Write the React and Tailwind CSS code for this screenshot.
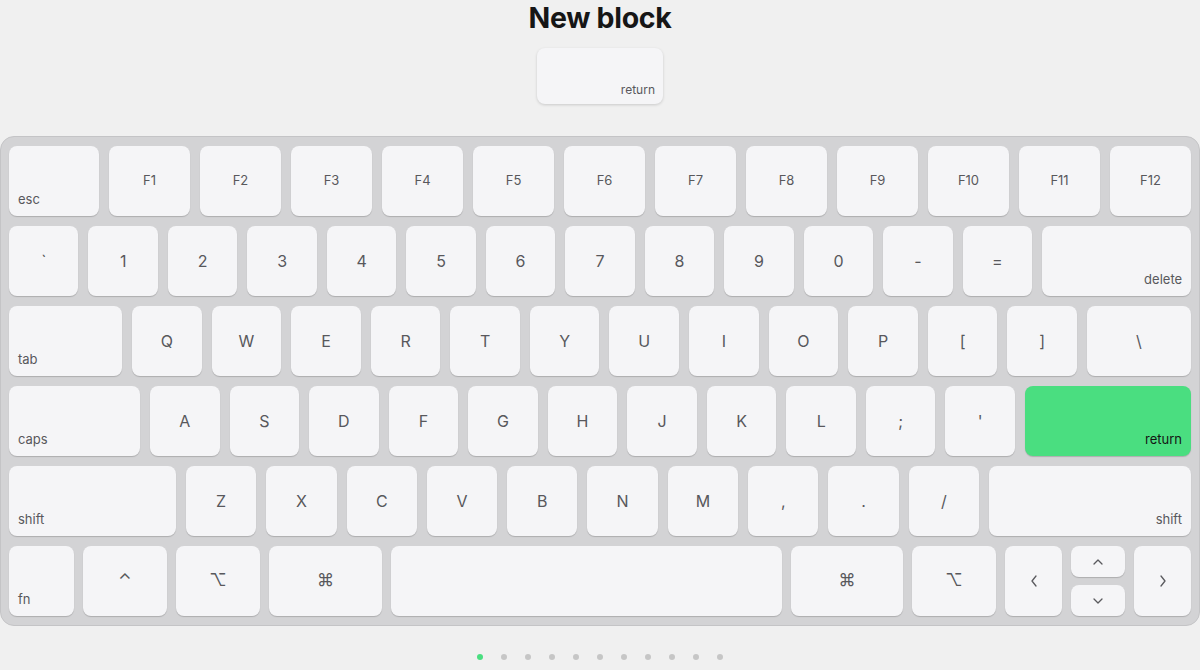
const font = { fontFamily: 'Inter, "DejaVu Sans", sans-serif' };

function Chevron({ dir }) {
  const pts = {
    up: '1,6 5,2 9,6',
    down: '1,2 5,6 9,2',
    left: '6,1 2,6 6,11',
    right: '2,1 6,6 2,11',
  }[dir];
  const vertical = dir === 'up' || dir === 'down';
  return (
    <svg
      width={vertical ? 10 : 8}
      height={vertical ? 8 : 12}
      viewBox={vertical ? '0 0 10 8' : '0 0 8 12'}
      fill="none"
      stroke="#5a5a5e"
      strokeWidth="1.3"
      strokeLinecap="round"
      strokeLinejoin="round"
    >
      <polyline points={pts} />
    </svg>
  );
}

// a key: w = fixed px width (omit for flex-1), pos = where the label sits
function Key({ label, w, pos = 'center', size = 'md', active = false, h = 'h-[70px]' }) {
  const place = {
    center: 'items-center justify-center',
    bl: 'items-end justify-start pl-[9px] pb-[7px]',
    br: 'items-end justify-end pr-[9px] pb-[7px]',
  }[pos];
  const text = {
    sm: 'text-[13px]',
    md: 'text-[17px]',
    lg: 'text-[16px]',
  }[size];
  return (
    <div
      className={`${h} ${w ? '' : 'flex-1'} flex ${place} ${text} rounded-[8px] shadow-[0_1px_1px_rgba(0,0,0,0.18)] ${
        active ? 'bg-[#4ade80] text-[#141414]' : 'bg-[#f5f5f7] text-[#58585c]'
      }`}
      style={w ? { width: w, flex: 'none' } : undefined}
    >
      {label}
    </div>
  );
}

function Row({ children, gap = 'gap-[10px]' }) {
  return <div className={`flex ${gap}`}>{children}</div>;
}

const fkeys = ['F1', 'F2', 'F3', 'F4', 'F5', 'F6', 'F7', 'F8', 'F9', 'F10', 'F11', 'F12'];
const nums = ['1', '2', '3', '4', '5', '6', '7', '8', '9', '0', '-', '='];
const qrow = ['Q', 'W', 'E', 'R', 'T', 'Y', 'U', 'I', 'O', 'P', '[', ']'];
const arow = ['A', 'S', 'D', 'F', 'G', 'H', 'J', 'K', 'L', ';', "'"];
const zrow = ['Z', 'X', 'C', 'V', 'B', 'N', 'M', ',', '.', '/'];

export default function App() {
  return (
    <div className="w-[1200px] h-[670px] bg-[#f0f0f0] flex flex-col items-center overflow-hidden" style={font}>
      <h1 className="text-[28.5px] leading-[36px] font-bold text-[#161616] tracking-[-0.3px]">New block</h1>

      <div className="mt-[12px] w-[126px] h-[56px] bg-[#f5f5f7] rounded-[8px] shadow-[0_1px_3px_rgba(0,0,0,0.16)] flex items-end justify-end pr-[8px] pb-[5px] text-[12px] text-[#58585c]">
        return
      </div>

      <div className="mt-[32px] w-[1200px] bg-[#d3d3d5] border border-[#c4c4c6] rounded-[14px] px-[8px] py-[9px] flex flex-col gap-[10px]">
        <Row>
          <Key label="esc" w={90} pos="bl" size="sm" />
          {fkeys.map((k) => (
            <Key key={k} label={k} size="sm" />
          ))}
        </Row>
        <Row>
          <Key label="`" size="lg" />
          {nums.map((k) => (
            <Key key={k} label={k} size="lg" />
          ))}
          <Key label="delete" w={149} pos="br" size="sm" />
        </Row>
        <Row>
          <Key label="tab" w={113} pos="bl" size="sm" />
          {qrow.map((k) => (
            <Key key={k} label={k} size="lg" />
          ))}
          <Key label="\" w={104} size="lg" />
        </Row>
        <Row>
          <Key label="caps" w={131} pos="bl" size="sm" />
          {arow.map((k) => (
            <Key key={k} label={k} size="lg" />
          ))}
          <Key label="return" w={166} pos="br" size="sm" active />
        </Row>
        <Row>
          <Key label="shift" w={167} pos="bl" size="sm" />
          {zrow.map((k) => (
            <Key key={k} label={k} size="lg" />
          ))}
          <Key label="shift" w={202} pos="br" size="sm" />
        </Row>
        <Row gap="gap-[9px]">
          <Key label="fn" w={65} pos="bl" size="sm" />
          <Key label="⌃" w={84} size="md" />
          <Key label="⌥" w={84} size="md" />
          <Key label="⌘" w={113} size="md" />
          <Key label="" />
          <Key label="⌘" w={112} size="md" />
          <Key label="⌥" w={84} size="md" />
          <Key label={<Chevron dir="left" />} w={57} />
          <div className="w-[54px] flex-none flex flex-col gap-[8px]">
            <Key label={<Chevron dir="up" />} h="h-[31px]" />
            <Key label={<Chevron dir="down" />} h="h-[31px]" />
          </div>
          <Key label={<Chevron dir="right" />} w={57} />
        </Row>
      </div>

      <div className="mt-[28px] flex gap-[18px]">
        {Array.from({ length: 11 }).map((_, i) => (
          <span
            key={i}
            className={`w-[6px] h-[6px] rounded-full ${i === 0 ? 'bg-[#4ade80]' : 'bg-[#c6c6c6]'}`}
          />
        ))}
      </div>
    </div>
  );
}
